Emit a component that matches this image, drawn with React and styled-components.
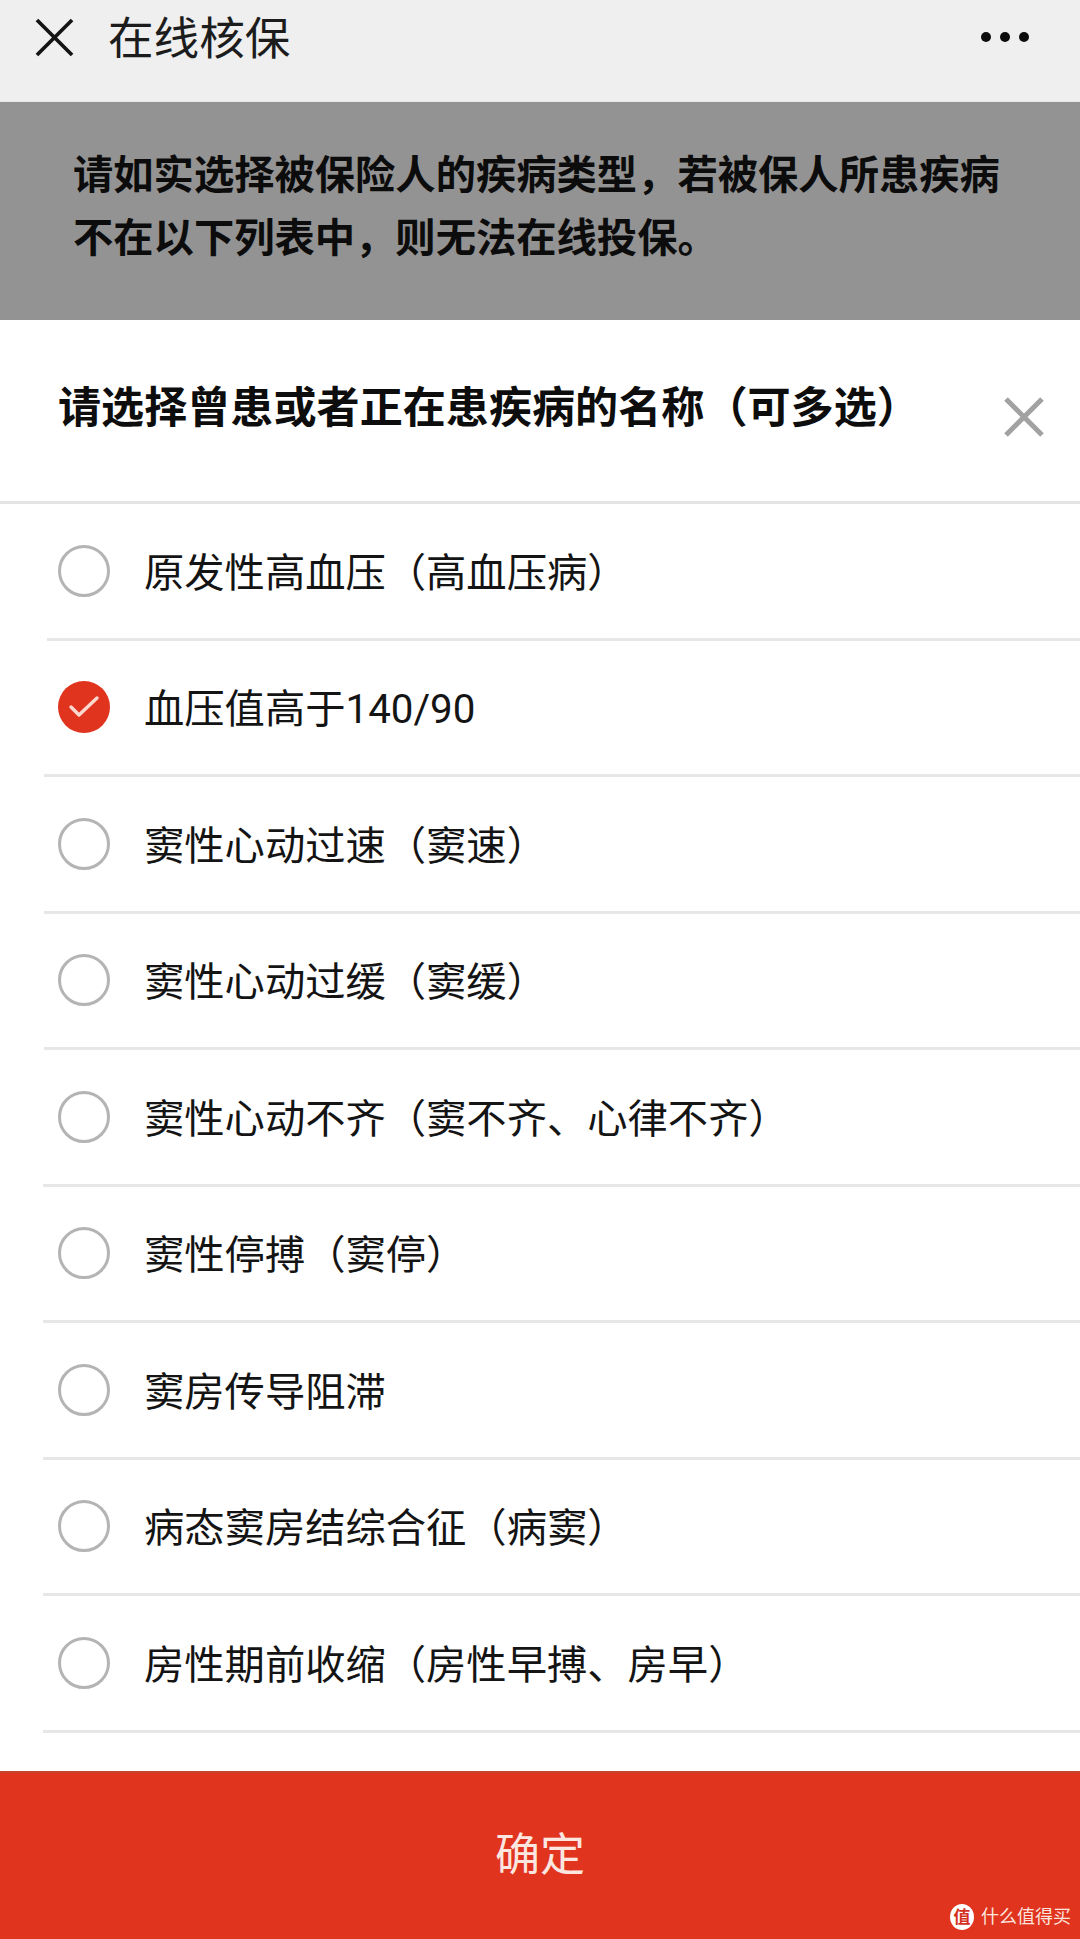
import React from "react";
import styled, { createGlobalStyle } from "styled-components";

const GlobalStyle = createGlobalStyle`
  html, body {
    margin: 0;
    padding: 0;
    background: #ffffff;
  }
  body {
    font-family: Roboto, "Noto Sans CJK SC", sans-serif;
  }
`;

const Page = styled.div`
  width: 1080px;
  height: 1939px;
  display: flex;
  flex-direction: column;
  overflow: hidden;
  background: #ffffff;
`;

const TopBar = styled.header`
  height: 102px;
  flex: none;
  box-sizing: border-box;
  display: flex;
  align-items: flex-start;
  padding: 18px 51px 0 35px;
  background: #efefef;
  border-bottom: 1px solid #e6e6e6;
`;

const TopTitle = styled.h1`
  margin: -2px 0 0 34px;
  font-size: 45.6px;
  line-height: 48px;
  font-weight: 400;
  color: #1c1c1c;
  flex: 1;
`;

const Dots = styled.div`
  display: flex;
  gap: 9px;
  margin-top: 14px;
`;

const Dot = styled.span`
  width: 10px;
  height: 10px;
  border-radius: 50%;
  background: #0c0c0c;
`;

const Notice = styled.section`
  height: 218px;
  flex: none;
  box-sizing: border-box;
  padding: 42px 60px 0 73px;
  background: #939393;
  color: #0c0c0c;
  font-size: 40.3px;
  line-height: 63px;
  font-weight: 700;
`;

const SheetHead = styled.div`
  height: 184px;
  flex: none;
  box-sizing: border-box;
  display: flex;
  align-items: flex-start;
  justify-content: space-between;
  padding: 0 36px 0 58px;
  border-bottom: 3px solid #e4e4e4;
`;

const SheetTitle = styled.h2`
  margin: 63px 0 0;
  font-size: 43.1px;
  line-height: 52px;
  font-weight: 700;
  color: #0d0d0d;
  white-space: nowrap;
`;

const SheetClose = styled.div`
  margin-top: 77px;
  line-height: 0;
`;

const List = styled.ul`
  margin: 0;
  padding: 0;
  list-style: none;
  flex: none;
`;

const Row = styled.li`
  height: 136.5px;
  box-sizing: border-box;
  display: flex;
  align-items: center;
  margin-left: ${(p) => p.$inset}px;
  padding-left: ${(p) => 58 - p.$inset}px;
  border-bottom: 3px solid #e7e7e7;
`;

const Radio = styled.span`
  width: 52px;
  height: 52px;
  flex: none;
  box-sizing: border-box;
  border-radius: 50%;
  display: flex;
  align-items: center;
  justify-content: center;
  border: ${(p) => (p.$checked ? "none" : "3px solid #b4b4b4")};
  background: ${(p) => (p.$checked ? "#e0341f" : "#ffffff")};
`;

const RowLabel = styled.span`
  margin: 6px 0 0 34px;
  font-size: 40.3px;
  line-height: 48px;
  color: #141414;
  white-space: nowrap;
`;

const Spacer = styled.div`
  flex: 1;
`;

const ConfirmBar = styled.button`
  position: relative;
  height: 168px;
  flex: none;
  border: none;
  padding: 0;
  display: flex;
  align-items: center;
  justify-content: center;
  background: #e0341f;
  border-top: 2px solid #c5452f;
  color: #fbe7e0;
  font-family: inherit;
  font-size: 45px;
  line-height: 52px;
`;

const Watermark = styled.div`
  position: absolute;
  right: 9px;
  bottom: 9px;
  display: flex;
  align-items: center;
  gap: 7px;
  color: #fbe4de;
  font-size: 18px;
  line-height: 26px;
`;

const WatermarkBadge = styled.span`
  width: 24px;
  height: 26px;
  border-radius: 50%;
  background: #ffffff;
  color: #d4301d;
  display: flex;
  align-items: center;
  justify-content: center;
  font-size: 17px;
  font-weight: 700;
`;

const CloseIcon = ({ size, color, weight }) => (
  <svg width={size} height={size} viewBox="0 0 40 40" fill="none">
    <path d="M2 2 L38 38 M38 2 L2 38" stroke={color} strokeWidth={weight} strokeLinecap="butt" />
  </svg>
);

const CheckMark = () => (
  <svg width="32" height="24" viewBox="0 0 32 24" fill="none">
    <path d="M3 12 L11 20 L29 3" stroke="#fbd9cf" strokeWidth="3.4" strokeLinecap="round" strokeLinejoin="round" />
  </svg>
);

const diseases = [
  { name: "原发性高血压（高血压病）", inset: 47 },
  { name: "血压值高于140/90", inset: 44, checked: true },
  { name: "窦性心动过速（窦速）", inset: 44 },
  { name: "窦性心动过缓（窦缓）", inset: 44 },
  { name: "窦性心动不齐（窦不齐、心律不齐）", inset: 43 },
  { name: "窦性停搏（窦停）", inset: 43 },
  { name: "窦房传导阻滞", inset: 43 },
  { name: "病态窦房结综合征（病窦）", inset: 43 },
  { name: "房性期前收缩（房性早搏、房早）", inset: 43 },
];

export default function App() {
  return (
    <Page>
      <GlobalStyle />
      <TopBar>
        <CloseIcon size={39} color="#141414" weight={3.8} />
        <TopTitle>在线核保</TopTitle>
        <Dots>
          <Dot />
          <Dot />
          <Dot />
        </Dots>
      </TopBar>
      <Notice>请如实选择被保险人的疾病类型，若被保人所患疾病不在以下列表中，则无法在线投保。</Notice>
      <SheetHead>
        <SheetTitle>请选择曾患或者正在患疾病的名称（可多选）</SheetTitle>
        <SheetClose>
          <CloseIcon size={40} color="#a2a2a2" weight={5} />
        </SheetClose>
      </SheetHead>
      <List>
        {diseases.map((d) => (
          <Row key={d.name} $inset={d.inset}>
            <Radio $checked={d.checked}>{d.checked && <CheckMark />}</Radio>
            <RowLabel>{d.name}</RowLabel>
          </Row>
        ))}
      </List>
      <Spacer />
      <ConfirmBar>
        确定
        <Watermark>
          <WatermarkBadge>值</WatermarkBadge>
          什么值得买
        </Watermark>
      </ConfirmBar>
    </Page>
  );
}
